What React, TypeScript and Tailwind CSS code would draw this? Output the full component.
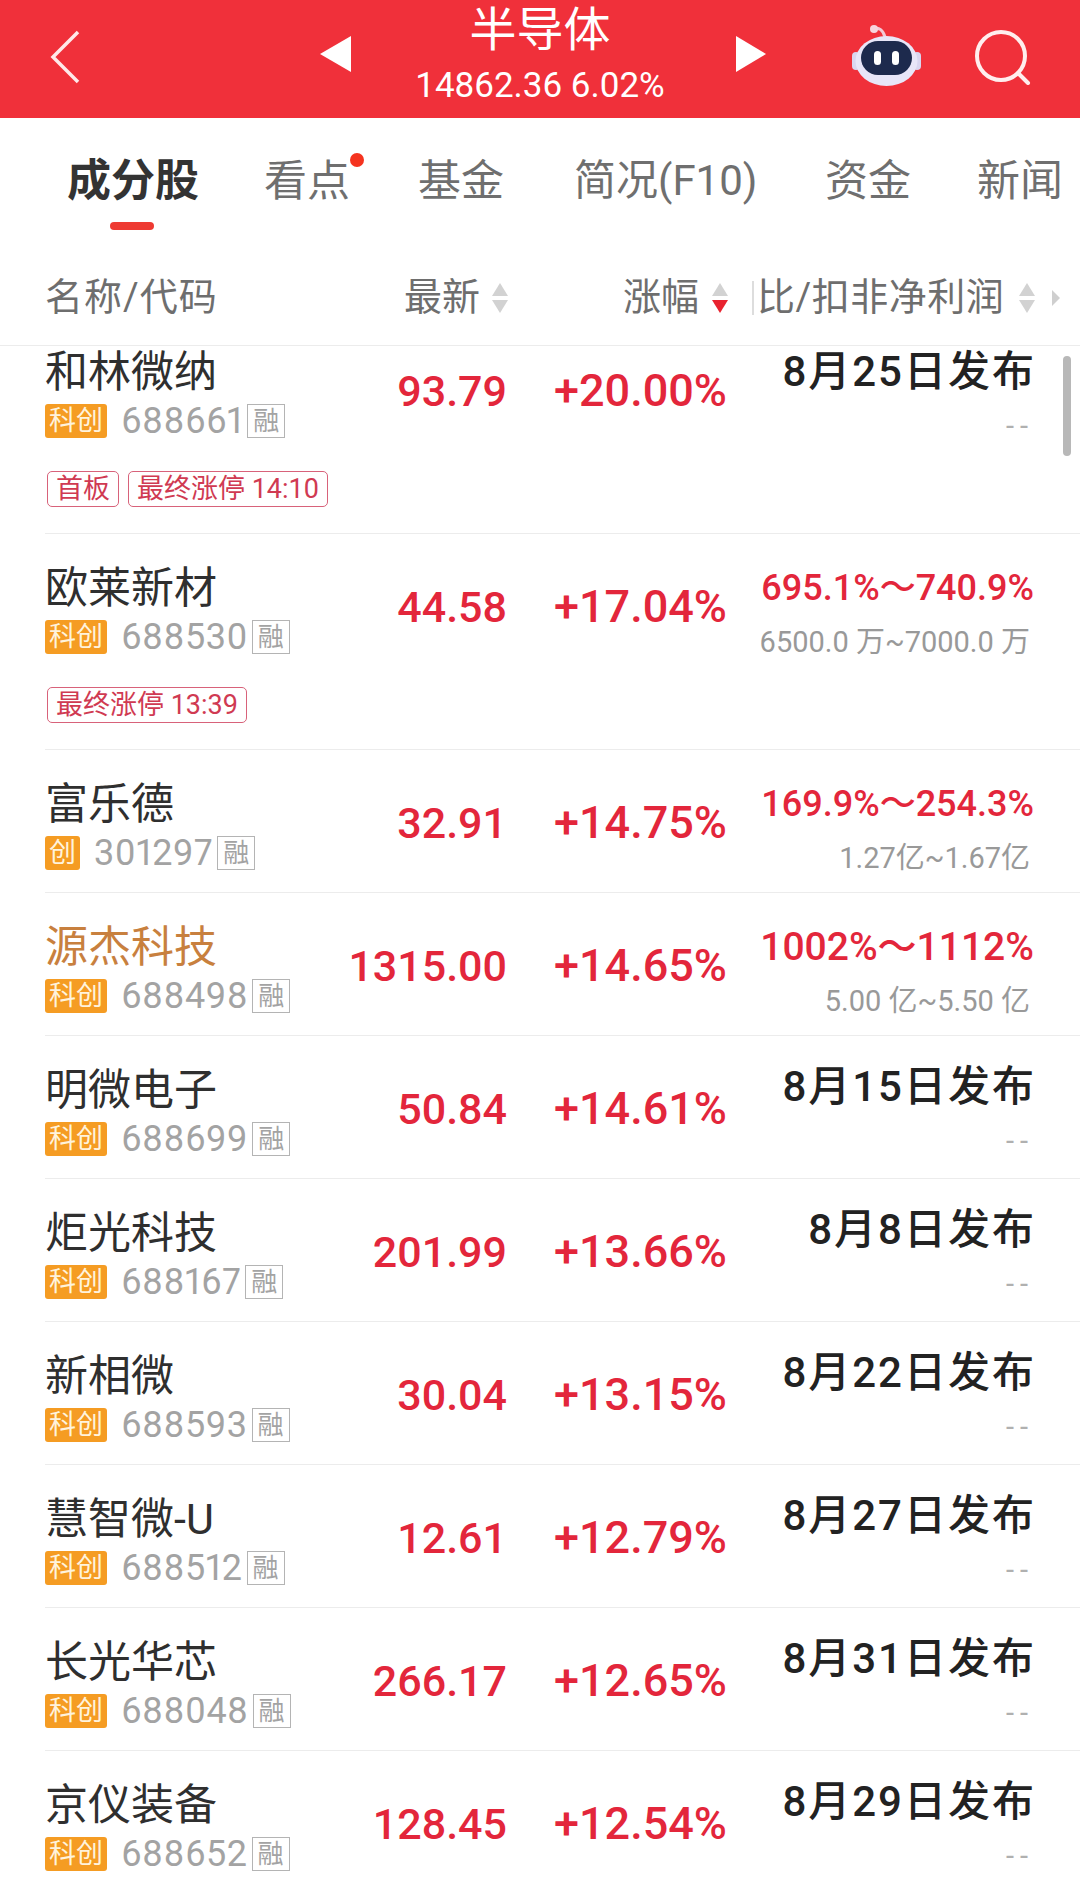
const cjk = "font-['Roboto','Noto_Sans_CJK_SC',sans-serif]";

type Stock = {
  name: string;
  board: string;
  code: string;
  price: string;
  pct: string;
  main: string;
  sub: string;
  tags?: string[];
  highlight?: boolean;
};

const stocks: Stock[] = [
  { name: '和林微纳', board: '科创', code: '688661', price: '93.79', pct: '+20.00%', main: '8月25日发布', sub: '--', tags: ['首板', '最终涨停 14:10'] },
  { name: '欧莱新材', board: '科创', code: '688530', price: '44.58', pct: '+17.04%', main: '695.1%～740.9%', sub: '6500.0 万~7000.0 万', tags: ['最终涨停 13:39'] },
  { name: '富乐德', board: '创', code: '301297', price: '32.91', pct: '+14.75%', main: '169.9%～254.3%', sub: '1.27亿~1.67亿' },
  { name: '源杰科技', board: '科创', code: '688498', price: '1315.00', pct: '+14.65%', main: '1002%～1112%', sub: '5.00 亿~5.50 亿', highlight: true },
  { name: '明微电子', board: '科创', code: '688699', price: '50.84', pct: '+14.61%', main: '8月15日发布', sub: '--' },
  { name: '炬光科技', board: '科创', code: '688167', price: '201.99', pct: '+13.66%', main: '8月8日发布', sub: '--' },
  { name: '新相微', board: '科创', code: '688593', price: '30.04', pct: '+13.15%', main: '8月22日发布', sub: '--' },
  { name: '慧智微-U', board: '科创', code: '688512', price: '12.61', pct: '+12.79%', main: '8月27日发布', sub: '--' },
  { name: '长光华芯', board: '科创', code: '688048', price: '266.17', pct: '+12.65%', main: '8月31日发布', sub: '--' },
  { name: '京仪装备', board: '科创', code: '688652', price: '128.45', pct: '+12.54%', main: '8月29日发布', sub: '--' },
];

function SortArrows({ active }: { active?: boolean }) {
  return (
    <svg width="20" height="34" viewBox="0 0 20 34" className="shrink-0">
      <path d="M10 2 L18 15 H2 Z" fill="#d2d2d2" />
      <path d="M10 32 L18 19 H2 Z" fill={active ? '#e8232f' : '#d2d2d2'} />
    </svg>
  );
}

function RobotIcon() {
  return (
    <svg width="69" height="63" viewBox="0 0 69 63">
      <path d="M22 5 C27 3 31 6 33 13" fill="none" stroke="#f3c9d6" strokeWidth="3" />
      <circle cx="22" cy="5" r="4" fill="#f7d5de" />
      <rect x="0" y="28" width="8" height="18" rx="4" fill="#d9d6f0" />
      <rect x="61" y="28" width="8" height="18" rx="4" fill="#d9d6f0" />
      <ellipse cx="34.5" cy="37" rx="31" ry="25" fill="#e8e6f8" />
      <rect x="9" y="17" width="51" height="34" rx="17" fill="#1d2a4d" />
      <rect x="22" y="27" width="7" height="14" rx="3.5" fill="#ffffff" />
      <rect x="40" y="27" width="7" height="14" rx="3.5" fill="#ffffff" />
    </svg>
  );
}

function SearchIcon() {
  return (
    <svg width="56" height="56" viewBox="0 0 56 56" fill="none" stroke="#ffeeee" strokeWidth="4">
      <circle cx="26" cy="27" r="24" />
      <path d="M43 44 L53 54" strokeLinecap="round" />
    </svg>
  );
}

function Row({ stock }: { stock: Stock }) {
  const isRange = stock.main.includes('％') || stock.main.includes('%');
  const isDash = stock.sub === '--';
  return (
    <div className="flex pl-[45px]">
      <div className="flex w-full border-b border-[#ececec]">
        <div className="w-[282px] shrink-0 pt-[29px] pb-[21px]">
          <div className={`h-[50px] text-[43px] leading-[50px] whitespace-nowrap ${stock.highlight ? 'text-[#c8803e]' : 'text-[#2f2f2f]'}`}>
            {stock.name}
          </div>
          <div className="mt-[6px] flex h-[36px] items-center">
            <span className="flex h-[34px] items-center justify-center rounded-[3px] bg-[#f59c23] px-[4px] text-[27px] leading-none text-[#fff3dc]">
              {stock.board}
            </span>
            <span className="ml-[14px] text-[36px] leading-none tracking-[0.5px] text-[#a3a3a3] proportional-nums">{stock.code}</span>
            <span className="ml-[4px] flex h-[34px] w-[38px] items-center justify-center border border-[#b4b4b4] text-[26px] leading-none text-[#a3a3a3]">
              融
            </span>
          </div>
          {stock.tags && (
            <div className="mt-[32px] mb-[5px] ml-[2px] flex gap-[9px] whitespace-nowrap">
              {stock.tags.map((tag) => (
                <span
                  key={tag}
                  className="flex h-[36px] items-center rounded-[5px] border border-[#d8627a] px-[8px] text-[27px] leading-none text-[#d03a52]"
                >
                  {tag}
                </span>
              ))}
            </div>
          )}
        </div>
        <div className="w-[180px] shrink-0 pt-[48px] text-right text-[43px] leading-[50px] font-medium text-[#e3263b]">
          {stock.price}
        </div>
        <div className="w-[220px] shrink-0 pt-[48px] text-right text-[45px] leading-[50px] font-medium text-[#e3263b]">
          {stock.pct}
        </div>
        <div className="w-[307px] shrink-0 pt-[29px] text-right whitespace-nowrap">
          {isRange ? (
            <div className={`h-[50px] leading-[50px] font-medium text-[#e3263b] ${stock.main.length > 12 ? 'text-[36px]' : 'text-[39px]'}`}>
              {stock.main}
            </div>
          ) : (
            <div className={`-mr-[2px] h-[50px] text-[42px] leading-[50px] font-medium tracking-[2px] text-[#222222] ${stock.tags ? '' : '-mt-[3px] mb-[3px]'}`}>
              {stock.main}
            </div>
          )}
          <div className={`mt-[11px] h-[36px] text-[29px] leading-[36px] ${isDash ? 'tracking-[6px] text-[#b0b0b0]' : 'pr-[4px] text-[#999999]'}`}>
            {stock.sub}
          </div>
        </div>
      </div>
    </div>
  );
}

export default function App() {
  return (
    <div className={`flex h-[1889px] w-[1080px] flex-col overflow-hidden bg-white ${cjk}`}>
      <div className="flex h-[118px] shrink-0 bg-[#f0303a] text-white">
        <svg width="30" height="54" viewBox="0 0 30 54" fill="none" stroke="#ffe9e9" strokeWidth="3.5" className="mt-[30px] ml-[50px] shrink-0">
          <path d="M28 2 L3 27 L28 52" />
        </svg>
        <svg width="31" height="36" viewBox="0 0 31 36" className="mt-[36px] ml-[240px] shrink-0">
          <path d="M31 0 V36 L0 18 Z" fill="#ffffff" />
        </svg>
        <div className="w-[385px] shrink-0 pr-[7px] text-center">
          <div className="h-[54px] text-[47px] leading-[60px]">半导体</div>
          <div className="mt-[14px] h-[36px] text-[35px] leading-[36px]">14862.36 6.02%</div>
        </div>
        <svg width="30" height="36" viewBox="0 0 30 36" className="mt-[36px] shrink-0">
          <path d="M0 0 V36 L30 18 Z" fill="#ffffff" />
        </svg>
        <div className="mt-[24px] ml-[86px] shrink-0">
          <RobotIcon />
        </div>
        <div className="mt-[29px] ml-[54px] shrink-0">
          <SearchIcon />
        </div>
      </div>

      <div className="flex h-[132px] shrink-0 items-start pt-[38px] pl-[67px] text-[43px] leading-[50px] whitespace-nowrap text-[#6f6f6f]">
        <div className="relative w-[132px] text-[44px] font-bold text-[#333333]">
          成分股
          <span className="absolute top-[66px] left-[43px] h-[8px] w-[44px] rounded-full bg-[#ee3a32]" />
        </div>
        <div className="relative ml-[65px] w-[84px]">
          看点
          <span className="absolute -top-[3px] -right-[16px] h-[14px] w-[14px] rounded-full bg-[#f5331f]" />
        </div>
        <div className="ml-[70px] w-[84px]">基金</div>
        <div className="ml-[72px] w-[182px] text-[42px]">简况(F10)</div>
        <div className="ml-[69px] w-[84px]">资金</div>
        <div className="ml-[68px] w-[84px]">新闻</div>
      </div>

      <div className="flex h-[96px] shrink-0 items-center border-b border-[#ececec] pl-[45px] text-[38px] whitespace-nowrap text-[#6e6e6e]">
        <span className="w-[359px] shrink-0 tracking-[1px]">名称/代码</span>
        <span className="w-[76px] shrink-0">最新</span>
        <span className="ml-[10px] shrink-0">
          <SortArrows />
        </span>
        <span className="ml-[113px] w-[76px] shrink-0">涨幅</span>
        <span className="ml-[11px] shrink-0">
          <SortArrows active />
        </span>
        <span className="ml-[22px] h-[34px] w-[2px] shrink-0 bg-[#dddddd]" />
        <span className="ml-[3px] w-[260px] shrink-0 tracking-[0.5px]">比/扣非净利润</span>
        <SortArrows />
        <svg width="10" height="18" viewBox="0 0 10 18" className="ml-[14px] shrink-0">
          <path d="M1 1 L9 9 L1 17 Z" fill="#cfcfcf" />
        </svg>
      </div>

      <div className="relative min-h-0 flex-1 overflow-hidden">
        <div className="-mt-[28px]">
          {stocks.map((s) => (
            <Row key={s.code} stock={s} />
          ))}
        </div>
        <div className="absolute top-[10px] right-[9px] h-[100px] w-[8px] rounded-full bg-[#b8b8b8]" />
      </div>
    </div>
  );
}
